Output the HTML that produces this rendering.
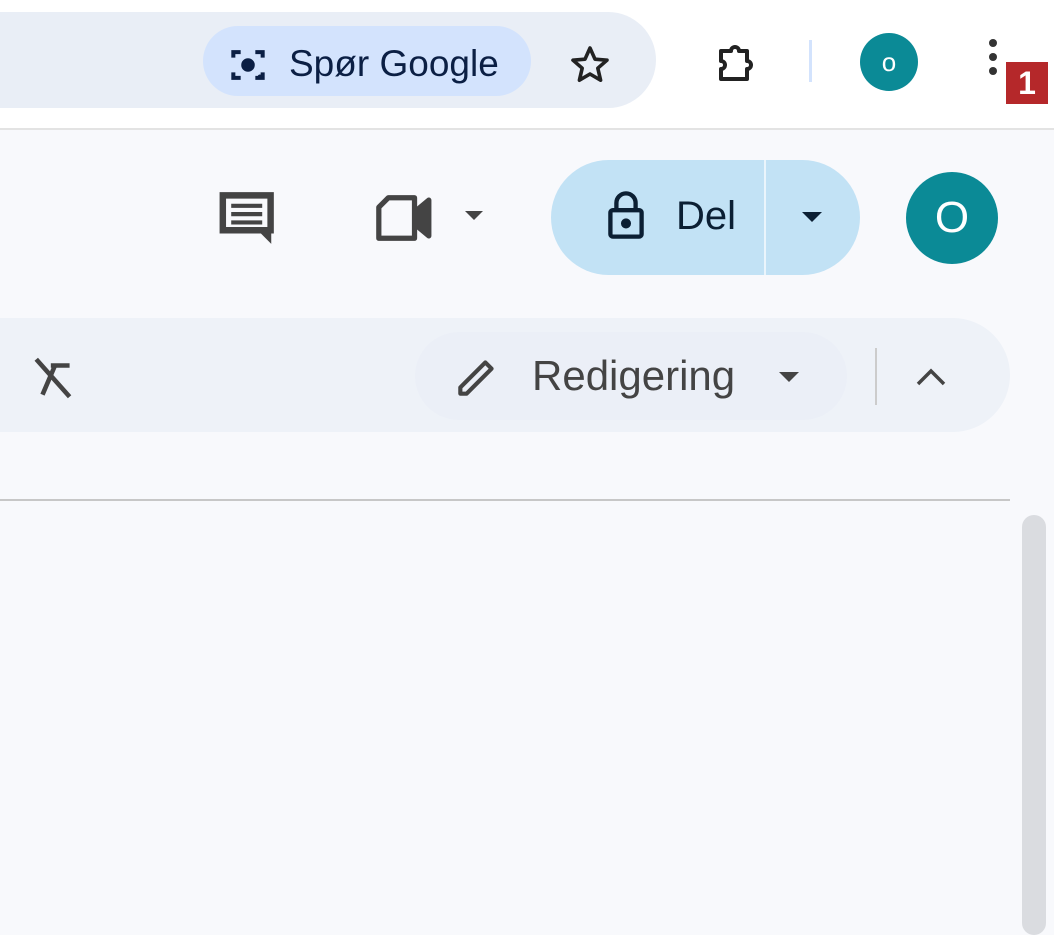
<!DOCTYPE html>
<html><head><style>
body{margin:0;width:1054px;height:920px;overflow:hidden;background:#f8f9fc;font-family:"Liberation Sans",sans-serif;position:relative}
.a{position:absolute}
</style></head><body>
<div class="a" style="left:0;top:0;width:1054px;height:128px;background:#fff;border-bottom:2px solid #e3e3e3"></div>
<div class="a" style="left:-60px;top:12px;width:716px;height:96px;border-radius:48px;background:#e9eef6"></div>
<div class="a" style="left:203px;top:26px;width:328px;height:70px;border-radius:35px;background:#d3e3fd"></div>
<svg class="a" style="left:226px;top:43px" width="44" height="44" viewBox="0 0 24 24" fill="none" stroke="#0b1f44" stroke-width="2.2"><path d="M4 8V5h4M16 5h4v3M20 16v3h-4M8 19H4v-3"/><circle cx="12" cy="12" r="2.6" fill="#0b1f44"/><circle cx="18.5" cy="18.5" r="1.3" fill="#0b1f44" stroke="none"/></svg>
<div class="a" style="left:289px;top:43px;font-size:37px;color:#0b1f44;line-height:42px">Spør Google</div>
<svg class="a" style="left:566px;top:41px" width="48" height="48" viewBox="0 0 24 24" fill="none" stroke="#222" stroke-width="1.8" stroke-linejoin="round"><path d="M12 3.5l2.5 5.6 6 .5-4.6 4 1.4 6L12 16.5 6.7 19.6l1.4-6-4.6-4 6-.5z"/></svg>
<svg class="a" style="left:711px;top:40px" width="48" height="50" viewBox="0 0 24 24" fill="none" stroke="#222" stroke-width="2" stroke-linejoin="round"><path d="M5 5h5a2 2 0 014 0h4v5a2 2 0 010 4v5H5v-5a2 2 0 000-4z"/></svg>
<div class="a" style="left:809px;top:40px;width:3px;height:42px;background:#d3e3fd"></div>
<div class="a" style="left:860px;top:33px;width:58px;height:58px;border-radius:50%;background:#0b8a96;color:#fff;font-size:26px;text-align:center;line-height:58px">o</div>
<div class="a" style="left:989px;top:39px;width:8px;height:8px;border-radius:50%;background:#333;box-shadow:0 14px #333,0 28px #333"></div>
<div class="a" style="left:1006px;top:62px;width:42px;height:42px;background:#b5282a;color:#fff;font-size:32px;font-weight:bold;text-align:center;line-height:42px">1</div>

<svg class="a" style="left:217px;top:189px" width="62" height="58" viewBox="0 0 24 22" fill="#444"><path d="M1 1h21v16h-1v4l-4-4H1z"/><path d="M3.5 3.5h16v11h-16z" fill="#f8f9fc"/><path d="M5.5 5.5h12v1.6h-12zM5.5 8.7h12v1.6h-12zM5.5 11.9h12v1.6h-12z"/></svg>
<svg class="a" style="left:374px;top:193px" width="62" height="50" viewBox="0 0 26 21" fill="none" stroke="#444" stroke-width="2.2" stroke-linejoin="round"><path d="M6 2h11v17H2V6z"/><path d="M17 8l6-5v15l-6-5" fill="#444"/></svg>
<div class="a" style="left:465px;top:211px;border-left:9px solid transparent;border-right:9px solid transparent;border-top:9px solid #444"></div>
<div class="a" style="left:551px;top:160px;width:309px;height:115px;border-radius:58px;background:#c2e2f5"></div>
<div class="a" style="left:764px;top:160px;width:2px;height:115px;background:#eaf5fc"></div>
<svg class="a" style="left:604px;top:191px" width="44" height="48" viewBox="0 0 18 20" fill="none" stroke="#0b1f33" stroke-width="1.8"><rect x="2.5" y="8" width="13" height="11" rx="1"/><path d="M5 8V5a4 4 0 018 0v3"/><circle cx="9" cy="13.5" r="1.2" fill="#0b1f33"/></svg>
<div class="a" style="left:676px;top:193px;font-size:40px;color:#0b1f33;line-height:46px">Del</div>
<div class="a" style="left:802px;top:212px;border-left:10px solid transparent;border-right:10px solid transparent;border-top:10px solid #0b1f33"></div>
<div class="a" style="left:906px;top:172px;width:92px;height:92px;border-radius:50%;background:#0b8a96;color:#fff;font-size:44px;text-align:center;line-height:92px">O</div>

<div class="a" style="left:-60px;top:318px;width:1070px;height:114px;border-radius:57px;background:#eef2f8"></div>
<div class="a" style="left:415px;top:332px;width:432px;height:88px;border-radius:44px;background:#ebeff7"></div>
<svg class="a" style="left:30px;top:353px" width="50" height="50" viewBox="0 0 24 24" fill="none" stroke="#444" stroke-width="2.2"><path d="M3 3l16 18M10 6h9M12 6l-6 14"/></svg>
<svg class="a" style="left:452px;top:352px" width="50" height="50" viewBox="0 0 24 24" fill="none" stroke="#444" stroke-width="2" stroke-linejoin="round"><path d="M4 20v-3L16 5l3 3L7 20z"/></svg>
<div class="a" style="left:532px;top:352px;font-size:42px;color:#444;line-height:48px">Redigering</div>
<div class="a" style="left:779px;top:372px;border-left:10px solid transparent;border-right:10px solid transparent;border-top:10px solid #444"></div>
<div class="a" style="left:875px;top:348px;width:2px;height:57px;background:#ccc"></div>
<svg class="a" style="left:914px;top:364px" width="34" height="24" viewBox="0 0 34 24" fill="none" stroke="#444" stroke-width="3.5"><path d="M4 20L17 7l13 13"/></svg>

<div class="a" style="left:0;top:499px;width:1010px;height:2px;background:#c7c7c7"></div>
<div class="a" style="left:1022px;top:515px;width:24px;height:420px;border-radius:12px;background:#dadce0"></div>
</body></html>
